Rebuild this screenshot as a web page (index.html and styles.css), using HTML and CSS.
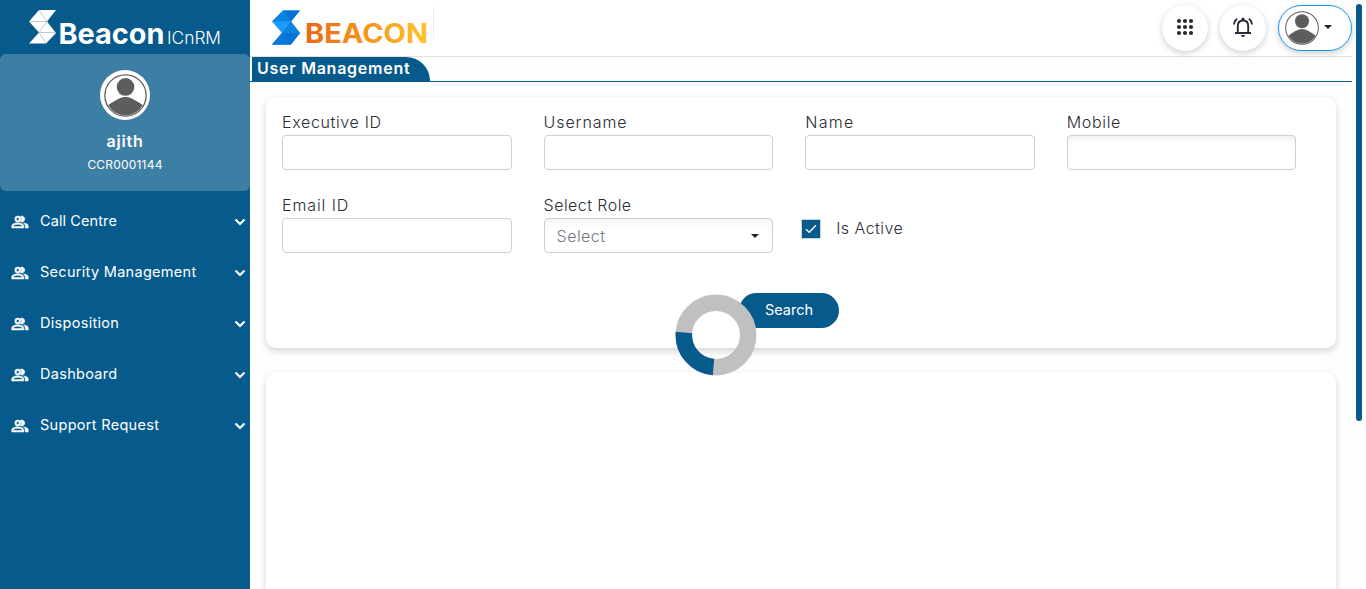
FILE: index.html
```html
<!DOCTYPE html>
<html lang="en">
<head>
<meta charset="utf-8">
<title>User Management</title>
<link rel="stylesheet" href="styles.css">
</head>
<body>
<svg class="defs" width="0" height="0" aria-hidden="true">
  <symbol id="avatar" viewBox="0 0 100 100">
    <clipPath id="disc"><circle cx="50" cy="50" r="46"/></clipPath>
    <circle cx="50" cy="50" r="48" fill="#fff" stroke="#5d5d5d" stroke-width="3"/>
    <circle cx="50" cy="30" r="20.500" fill="#5d5d5d"/>
    <path clip-path="url(#disc)" d="M0 80Q34 53 50 53T100 80V100H0Z" fill="#5d5d5d"/>
  </symbol>
  <symbol id="people" viewBox="0 0 24 24">
    <path fill="#fff" stroke="#fff" stroke-width=".7" fill-rule="evenodd" d="M9 12a4 4 0 1 0 0-8 4 4 0 0 0 0 8m0-6a2 2 0 1 1 0 4 2 2 0 0 1 0-4M9 13c-2.700 0-8 1.300-8 4v3h16v-3c0-2.700-5.300-4-8-4m6 5H3v-1c.2-.7 3.300-2 6-2s5.800 1.300 6 2M12.500 11.600a4 4 0 1 0 0-7.200 5.500 5.500 0 0 1 0 7.200M16.500 13.200c1.500.9 2.500 2.100 2.500 3.800v3h4v-3c0-2.300-3.500-3.500-6.500-3.800"/>
  </symbol>
  <symbol id="chevron" viewBox="0 0 12 8"><path d="M1.500 1.500L6 6L10.500 1.500" fill="none" stroke="#fff" stroke-width="2.200"/></symbol>
</svg>
<div class="app">
  <aside class="sidebar">
    <svg class="brand" width="250" height="54">
      <path d="M39 10H56L47 21.500L56 33L46 43.500H29L39 32.500L29 21.500Z" fill="#fff"/>
      <path d="M29 21.500H47L39 10M47 21.500L39 32.500H55M39 32.500L46 43.500" fill="none" stroke="#a5c2d6" stroke-width=".8"/>
      <text x="58.500" y="43.500" class="brand-name" textLength="106" lengthAdjust="spacingAndGlyphs">Beacon</text>
      <text x="167" y="44" class="brand-sub" textLength="54" lengthAdjust="spacingAndGlyphs">ICnRM</text>
    </svg>
    <section class="profile">
      <span class="profile-photo"><svg width="43" height="43"><use href="#avatar"/></svg></span>
      <strong class="profile-name">ajith</strong>
      <span class="profile-code">CCR0001144</span>
    </section>
    <nav class="menu">
      <a class="menu-item"><svg width="18" height="18"><use href="#people"/></svg><span class="menu-text tight">Call Centre</span><svg width="12" height="8"><use href="#chevron"/></svg></a>
      <a class="menu-item"><svg width="18" height="18"><use href="#people"/></svg><span class="menu-text">Security Management</span><svg width="12" height="8"><use href="#chevron"/></svg></a>
      <a class="menu-item"><svg width="18" height="18"><use href="#people"/></svg><span class="menu-text">Disposition</span><svg width="12" height="8"><use href="#chevron"/></svg></a>
      <a class="menu-item"><svg width="18" height="18"><use href="#people"/></svg><span class="menu-text">Dashboard</span><svg width="12" height="8"><use href="#chevron"/></svg></a>
      <a class="menu-item"><svg width="18" height="18"><use href="#people"/></svg><span class="menu-text">Support Request</span><svg width="12" height="8"><use href="#chevron"/></svg></a>
    </nav>
  </aside>
  <main class="main">
    <header class="topbar">
      <svg class="logo" width="184" height="56">
        <defs><linearGradient id="orange" gradientUnits="userSpaceOnUse" x1="56" x2="178" y1="0" y2="0"><stop offset="0" stop-color="#ec6814"/><stop offset="1" stop-color="#ffc425"/></linearGradient></defs>
        <path d="M33 10.500H50L41 21.500L50 33L41 44.500H22L32 33L22 21.500Z" fill="#1e9bff"/>
        <path d="M33 10.500L41 21.500H22ZM32 33L41 21.500L50 33Z" fill="#0c83dc"/>
        <path d="M33 10.500H50L41 21.500ZM32 33H50L41 44.500ZM32 33L22 44.500H41Z" fill="#0873d5"/>
        <path d="M32 33L41 44.500H22Z" fill="#0a78da"/>
        <text x="55" y="42.500" class="logo-name" textLength="123" lengthAdjust="spacingAndGlyphs" fill="url(#orange)">BEACON</text>
        <path d="M183.500 6V39" stroke="#eee"/>
      </svg>
      <div class="actions">
        <button class="round"><svg class="raised" width="18" height="18" viewBox="0 0 18 18" fill="#272b33"><circle cx="3" cy="3" r="2.100"/><circle cx="9" cy="3" r="2.100"/><circle cx="15" cy="3" r="2.100"/><circle cx="3" cy="9" r="2.100"/><circle cx="9" cy="9" r="2.100"/><circle cx="15" cy="9" r="2.100"/><circle cx="3" cy="15" r="2.100"/><circle cx="9" cy="15" r="2.100"/><circle cx="15" cy="15" r="2.100"/></svg></button>
        <button class="round"><svg class="raised" width="24" height="24" viewBox="0 0 24 24" fill="none" stroke="#272b33" stroke-width="1.900"><path d="M4 18H20M6.800 18V11Q6.800 5.500 12 5.500T17.200 11V18M3 9.500Q3.200 6.200 6 3.800M21 9.500Q20.800 6.200 18 3.800"/><path d="M10.500 4a1.500 1.500 0 0 1 3 0v1.500h-3ZM10 20h4a2 2 0 0 1-4 0Z" fill="#272b33" stroke="none"/></svg></button>
        <button class="account"><svg width="34" height="34"><use href="#avatar"/></svg><i class="caret"></i></button>
      </div>
    </header>
    <div class="titlebar"><h1 class="title">User Management</h1></div>
    <div class="content">
      <form class="card filters">
        <div class="grid">
          <label class="field"><span>Executive ID</span><input class="control"></label>
          <label class="field"><span class="wide">Username</span><input class="control"></label>
          <label class="field"><span class="wider">Name</span><input class="control"></label>
          <label class="field"><span>Mobile</span><input class="control shaded"></label>
          <label class="field"><span class="wide">Email ID</span><input class="control"></label>
          <div class="field"><span class="narrow">Select Role</span><div class="control shaded select"><span class="narrow">Select</span><i class="caret"></i></div></div>
          <div class="check"><span class="box"><svg width="12" height="10" viewBox="0 0 12 10"><path d="M1 5.200L4.200 8.300L11 1.200" fill="none" stroke="#fff" stroke-width="1.400"/></svg></span><span class="narrow">Is Active</span></div>
        </div>
        <div class="buttons"><button type="button" class="search">Search</button></div>
      </form>
      <section class="card results"></section>
    </div>
  </main>
  <svg class="spinner" width="82" height="82" viewBox="0 0 82 82" fill="none" stroke-width="16.500">
    <circle cx="41" cy="41" r="32.200" stroke="#c0c0c0"/>
    <path d="M38.500 73.100A32.200 32.200 0 0 1 8.900 38.500" stroke="#065a8c"/>
  </svg>
  <div class="scroll-thumb"></div>
</div>
</body>
</html>
```
FILE: styles.css
```css
* { box-sizing: border-box; }
body { margin: 0; height: 589px; overflow: hidden; background: #fefefe; color: #292c33; font-family: Inter, "Liberation Sans", sans-serif; font-size: 16px; }
button { padding: 0; border: 0; font-family: inherit; }
svg { display: block; flex: none; }
.defs { position: absolute; }
.app { display: flex; height: 589px; position: relative; }
.sidebar { width: 250px; flex: none; background: #065a8c; color: #fff; }
.brand-name { font-size: 29px; font-weight: 700; fill: #fff; }
.brand-sub { font-size: 17px; font-weight: 300; fill: #fff; }
.profile { height: 137px; border-radius: 6px; background: #3d7ea5; display: flex; flex-direction: column; align-items: center; padding-top: 16px; }
.profile-photo { width: 50px; height: 50px; border-radius: 50%; background: #fff; display: flex; align-items: center; justify-content: center; }
.profile-name { font-size: 16px; line-height: 20px; font-weight: 600; margin-top: 11px; letter-spacing: .8px; }
.profile-code { font-size: 12px; line-height: 16px; margin-top: 6px; letter-spacing: .2px; }
.menu { padding-top: 5px; }
.menu-item { height: 51px; display: flex; align-items: center; padding: 0 4px 0 11px; }
.menu-text { flex: 1; font-size: 14.500px; margin-left: 11px; padding-bottom: 2px; letter-spacing: .3px; }
.menu-text.tight { letter-spacing: .1px; }
.main { width: 1102px; display: flex; flex-direction: column; }
.topbar { height: 57px; flex: none; border-bottom: 1px solid #e1e1e1; display: flex; justify-content: space-between; background: #fff; }
.logo-name { font-size: 27px; font-weight: 700; }
.actions { display: flex; gap: 12px; padding-top: 5px; }
.round { width: 46px; height: 46px; border-radius: 50%; background: #fff; display: flex; align-items: center; justify-content: center; box-shadow: 0 2px 6px #0003; }
.raised { margin-bottom: 2px; }
.account { width: 74px; height: 46px; border: 1px solid #1c9bf5; border-radius: 23px; background: #fff; display: flex; align-items: center; gap: 5px; padding-left: 6px; box-shadow: 0 2px 6px #0003; }
.account .caret { margin-bottom: 2px; }
.caret { border: 4.500px solid transparent; border-top-color: #20232a; border-bottom: 0; }
.titlebar { height: 25px; flex: none; border-bottom: 1px solid #065a8c; padding-left: 2px; }
.title { margin: 0; width: 178px; height: 24px; background: #065a8c; border-radius: 0 24px 0 0; color: #fff; font-size: 16px; line-height: 23px; font-weight: 600; padding-left: 5px; white-space: nowrap; letter-spacing: .75px; }
.content { flex: 1; padding: 15px 16px 0; display: flex; flex-direction: column; gap: 24px; }
.card { background: #fff; border-radius: 10px; box-shadow: 0 3px 7px #0000002b; }
.filters { height: 251px; flex: none; padding: 15px 8px 0 16px; }
.grid { display: grid; grid-template-columns: repeat(4, 229.600px); column-gap: 32px; row-gap: 25px; }
.field { height: 58px; display: flex; flex-direction: column; font-weight: 300; letter-spacing: .65px; }
.field > span { line-height: 21px; height: 23px; white-space: nowrap; }
.narrow { letter-spacing: .45px; }
.wide { letter-spacing: .9px; }
.wider { letter-spacing: 1.300px; }
.control { width: 100%; height: 35px; border: 1px solid #ced0d2; border-radius: 4px; background: #fff; padding: 0 12px; }
.shaded { box-shadow: inset 0 5px 7px -3px #00000014; }
.select { display: flex; justify-content: space-between; align-items: center; color: #70777e; padding-right: 13px; }
.check { display: flex; align-items: flex-start; gap: 15px; padding-top: 24px; margin-left: -4px; line-height: 18px; font-weight: 300; }
.box { width: 20px; height: 20px; border: 1px solid #c6d5df; background: #065a8c; display: flex; align-items: center; justify-content: center; }
.buttons { margin-top: 40px; padding-left: 457px; }
.search { width: 100px; height: 35px; padding-bottom: 2px; border-radius: 18px; color: #fff; background: #065a8c; font-size: 14.500px; }
.results { flex: 1; border-radius: 10px 10px 0 0; }
.spinner { position: absolute; left: 675px; top: 294px; }
.scroll-thumb { position: absolute; left: 1356px; top: 4px; width: 6px; height: 417px; border-radius: 3px; background: #065a8c; }
```
